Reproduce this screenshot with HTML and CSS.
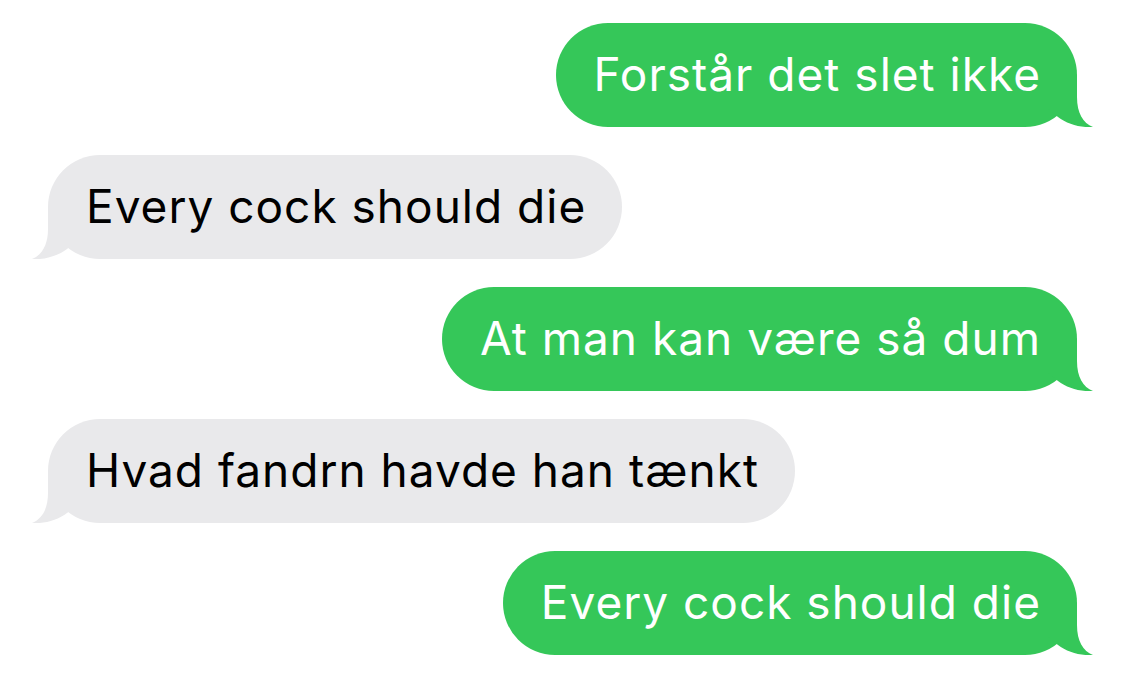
FILE: index.html
```html
<!DOCTYPE html>
<html>
<head>
<meta charset="utf-8">
<link rel="stylesheet" href="styles.css">
</head>
<body>
<div class="thread">
  <div class="bubble sent">Forstår det slet ikke<svg class="tail" viewBox="0 0 50 52"><path d="M0 0 L34 0 L34 22 C34 38 40 48 50 52 C38 53 24 49 15 42 L0 30 Z"/></svg></div>
  <div class="bubble received">Every cock should die<svg class="tail" viewBox="0 0 50 52"><path d="M0 0 L34 0 L34 22 C34 38 40 48 50 52 C38 53 24 49 15 42 L0 30 Z"/></svg></div>
  <div class="bubble sent">At man kan være så dum<svg class="tail" viewBox="0 0 50 52"><path d="M0 0 L34 0 L34 22 C34 38 40 48 50 52 C38 53 24 49 15 42 L0 30 Z"/></svg></div>
  <div class="bubble received">Hvad fandrn havde han tænkt<svg class="tail" viewBox="0 0 50 52"><path d="M0 0 L34 0 L34 22 C34 38 40 48 50 52 C38 53 24 49 15 42 L0 30 Z"/></svg></div>
  <div class="bubble sent">Every cock should die<svg class="tail" viewBox="0 0 50 52"><path d="M0 0 L34 0 L34 22 C34 38 40 48 50 52 C38 53 24 49 15 42 L0 30 Z"/></svg></div>
</div>
</body>
</html>
```
FILE: styles.css
```css
html, body {
  margin: 0;
  padding: 0;
  background: #ffffff;
}
.thread {
  display: flex;
  flex-direction: column;
  gap: 28px;
  padding: 23px 48px 0 48px;
  font-family: "Inter", "Noto Sans", sans-serif;
}
.bubble {
  position: relative;
  height: 104px;
  box-sizing: border-box;
  padding: 0 36px 2px 38px;
  border-radius: 52px;
  display: flex;
  align-items: center;
  font-size: 46px;
  letter-spacing: 1px;
  white-space: nowrap;
}
.sent {
  align-self: flex-end;
  background: #35c759;
  color: #ffffff;
}
.received {
  align-self: flex-start;
  background: #e9e9eb;
  color: #000000;
}
.tail {
  position: absolute;
  bottom: 0;
  width: 50px;
  height: 52px;
}
.sent .tail {
  right: -16px;
  fill: #35c759;
}
.received .tail {
  left: -16px;
  fill: #e9e9eb;
  transform: scaleX(-1);
}
```
